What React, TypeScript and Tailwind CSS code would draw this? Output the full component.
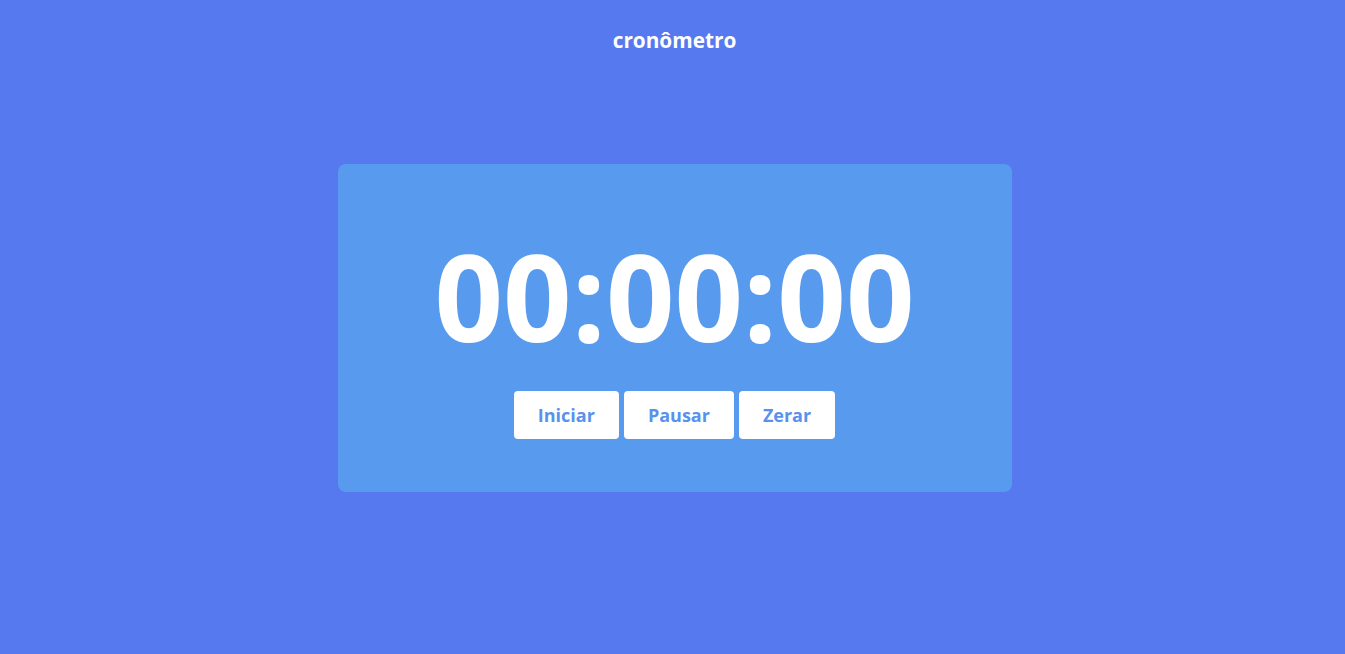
import React from "react";

export default function App() {
  return (
    <div
      className="min-h-[654px] w-full bg-[#5679ef] flex flex-col items-center pl-[4px]"
      style={{ fontFamily: '"Open Sans", sans-serif' }}
    >
      <h1 className="mt-[26px] text-[20.8px] leading-[28px] font-bold text-white">cronômetro</h1>
      <div className="mt-[110px] w-[674px] h-[328px] rounded-[8px] bg-[#589bee] flex flex-col items-center">
        <div className="mt-[72px] text-[120px] leading-none font-bold text-white">00:00:00</div>
        <div className="mt-[35px] flex gap-[5px]">
          <button className="h-[48px] px-[24px] rounded-[4px] bg-white text-[#5892ee] text-[18px] font-bold">Iniciar</button>
          <button className="h-[48px] px-[24px] rounded-[4px] bg-white text-[#5892ee] text-[18px] font-bold">Pausar</button>
          <button className="h-[48px] px-[24px] rounded-[4px] bg-white text-[#5892ee] text-[18px] font-bold">Zerar</button>
        </div>
      </div>
    </div>
  );
}
